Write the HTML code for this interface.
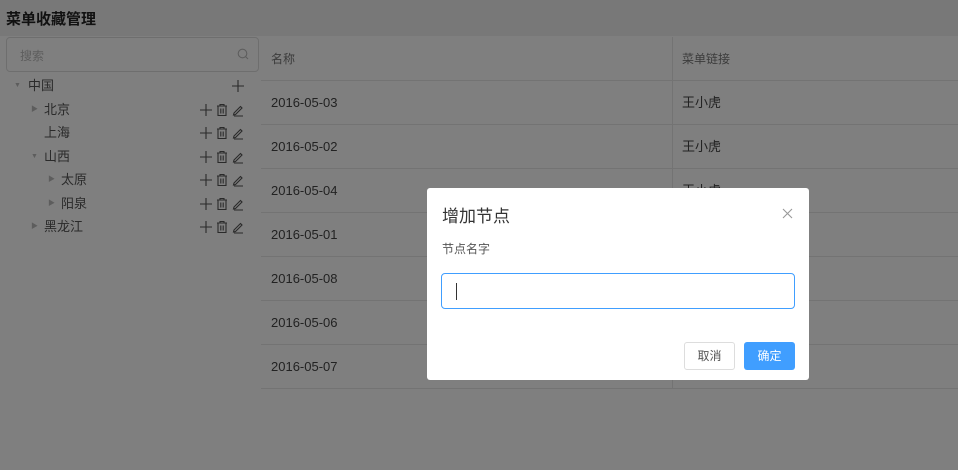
<!DOCTYPE html>
<html><head><meta charset="utf-8"><style>
*{box-sizing:border-box;margin:0;padding:0}
body{width:958px;height:470px;overflow:hidden;background:#fff;font-family:"Liberation Sans","Noto Sans CJK SC",sans-serif;font-size:13px;color:#333;position:relative}
.top{position:absolute;left:0;top:0;width:958px;height:36px;background:#f0f0f0}
.title{position:absolute;left:6px;top:8px;font-size:15px;font-weight:bold;color:#222}
.search{position:absolute;left:6px;top:37px;width:253px;height:35px;border:1px solid #ddd;border-radius:4px;background:#fff;color:#bbb;padding:9px 13px;font-size:12px}
.tree{position:absolute;left:0;top:74px;width:255px}
.row{height:23.5px;position:relative;font-size:13px;line-height:23px;color:#555}
.row .ar{position:absolute;font-size:7px;color:#bbb}
.ops{position:absolute;right:10px;top:3px;height:14px}
.ops svg{margin-left:2px}
.table{position:absolute;left:261px;top:37px;width:697px;background:#fff}
.tr{height:44px;border-bottom:1px solid #e6e6e6;position:relative;font-size:13px;line-height:44px;color:#444}
.tr.h{color:#777;font-size:12px}
.tr span{position:absolute;left:10px}
.tr span+span{left:421px}
.tr:before{content:"";position:absolute;left:411px;top:0;bottom:0;border-left:1px solid #e6e6e6}
.mask{position:absolute;inset:0;background:rgba(0,0,0,.5)}
.dlg{position:absolute;left:427px;top:188px;width:382px;height:192px;background:#fff;border-radius:3px}
.dlg h3{position:absolute;left:15px;top:14px;font-size:17px;font-weight:normal;color:#333}
.x{position:absolute;right:16px;top:20px}
.lbl{position:absolute;left:15px;top:52px;font-size:12px;color:#555}
.inp{position:absolute;left:14px;top:85px;width:354px;height:36px;border:1px solid #409eff;border-radius:4px}
.inp i{position:absolute;left:14px;top:9px;width:1px;height:17px;background:#333}
.b1{position:absolute;left:257px;top:154px;width:51px;height:28px;border:1px solid #ddd;border-radius:3px;font-size:12px;text-align:center;line-height:26px;color:#555}
.b2{position:absolute;left:317px;top:154px;width:51px;height:28px;background:#409eff;border-radius:3px;font-size:12px;text-align:center;line-height:28px;color:#fff}
</style></head><body>
<div class="top"></div>
<div class="title">菜单收藏管理</div>
<div class="search">搜索<svg style="position:absolute;right:9px;top:10px" width="12" height="12" viewBox="0 0 12 12"><circle cx="5.5" cy="5.5" r="4.3" fill="none" stroke="#bbb" stroke-width="1.1"/><path d="M8.6 8.6L11 11" stroke="#bbb" stroke-width="1.1"/></svg></div>
<svg width="0" height="0" style="position:absolute"><defs>
<g id="p"><path d="M7 1V13M1 7H13" stroke="#555" stroke-width="1.1" fill="none"/></g>
<g id="d"><path d="M2 3H12M5 3V1.5H9V3M3 3V12.5H11V3M5.8 5.5V10.5M8.2 5.5V10.5" stroke="#555" stroke-width="1.1" fill="none"/></g>
<g id="e"><path d="M3 10L9.5 3.5L11 5L4.5 11.5L2.5 12Z M3 13H12" stroke="#555" stroke-width="1.1" fill="none"/></g>
</defs></svg>
<div class="tree">
<div class="row"><span class="ar" style="left:14px">▼</span><span style="position:absolute;left:28px">中国</span><span class="ops"><svg width="14" height="14"><use href="#p"/></svg></span></div>
<div class="row"><span class="ar" style="left:31px">▶</span><span style="position:absolute;left:44px">北京</span><span class="ops"><svg width="14" height="14"><use href="#p"/></svg><svg width="14" height="14"><use href="#d"/></svg><svg width="14" height="14"><use href="#e"/></svg></span></div>
<div class="row"><span style="position:absolute;left:44px">上海</span><span class="ops"><svg width="14" height="14"><use href="#p"/></svg><svg width="14" height="14"><use href="#d"/></svg><svg width="14" height="14"><use href="#e"/></svg></span></div>
<div class="row"><span class="ar" style="left:31px">▼</span><span style="position:absolute;left:44px">山西</span><span class="ops"><svg width="14" height="14"><use href="#p"/></svg><svg width="14" height="14"><use href="#d"/></svg><svg width="14" height="14"><use href="#e"/></svg></span></div>
<div class="row"><span class="ar" style="left:48px">▶</span><span style="position:absolute;left:61px">太原</span><span class="ops"><svg width="14" height="14"><use href="#p"/></svg><svg width="14" height="14"><use href="#d"/></svg><svg width="14" height="14"><use href="#e"/></svg></span></div>
<div class="row"><span class="ar" style="left:48px">▶</span><span style="position:absolute;left:61px">阳泉</span><span class="ops"><svg width="14" height="14"><use href="#p"/></svg><svg width="14" height="14"><use href="#d"/></svg><svg width="14" height="14"><use href="#e"/></svg></span></div>
<div class="row"><span class="ar" style="left:31px">▶</span><span style="position:absolute;left:44px">黑龙江</span><span class="ops"><svg width="14" height="14"><use href="#p"/></svg><svg width="14" height="14"><use href="#d"/></svg><svg width="14" height="14"><use href="#e"/></svg></span></div>
</div>
<div class="table">
<div class="tr h"><span>名称</span><span>菜单链接</span></div>
<div class="tr"><span>2016-05-03</span><span>王小虎</span></div>
<div class="tr"><span>2016-05-02</span><span>王小虎</span></div>
<div class="tr"><span>2016-05-04</span><span>王小虎</span></div>
<div class="tr"><span>2016-05-01</span><span>王小虎</span></div>
<div class="tr"><span>2016-05-08</span><span>王小虎</span></div>
<div class="tr"><span>2016-05-06</span><span>王小虎</span></div>
<div class="tr"><span>2016-05-07</span><span>王小虎</span></div>
</div>
<div class="mask"></div>
<div class="dlg">
<h3>增加节点</h3><svg class="x" width="11" height="11"><path d="M1 1L10 10M10 1L1 10" stroke="#999" stroke-width="1.1"/></svg>
<div class="lbl">节点名字</div>
<div class="inp"><i></i></div>
<div class="b1">取消</div><div class="b2">确定</div>
</div>
</body></html>
